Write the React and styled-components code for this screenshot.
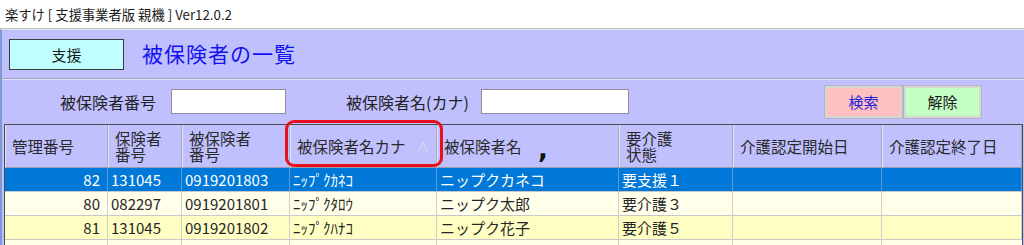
import React from "react";
import styled, { createGlobalStyle } from "styled-components";

const GlobalStyle = createGlobalStyle`
  html, body {
    margin: 0;
    padding: 0;
    background: #ffffff;
    overflow: hidden;
  }
  body {
    font-family: "Noto Sans CJK JP", "Noto Sans", sans-serif;
    color: #222;
  }
`;

const TitleBar = styled.div`
  height: 28px;
  padding-left: 5px;
  display: flex;
  align-items: center;
  font-size: 13.3px;
  color: #1a1a1a;
  background: #fff;
  border-bottom: 1px solid #c4c4c4;
`;

const Body = styled.div`
  background: #c0c0ff;
  border-left: 2px solid #7f9ad2;
  border-top: 1px solid #e4e4ec;
  height: 216px;
  overflow: hidden;
`;

const HeaderBand = styled.div`
  height: 48px;
  display: flex;
  align-items: center;
  gap: 18px;
  padding-left: 7px;
  border-bottom: 1px solid #a4a4c0;
  box-shadow: 0 1px 0 #e2e2f4;
`;

const ModeButton = styled.div`
  width: 113px;
  height: 29px;
  background: #c0ffff;
  border: 1px solid #3c3c3c;
  display: flex;
  align-items: center;
  justify-content: center;
  font-size: 15px;
  color: #1a1a1a;
`;

const PageTitle = styled.div`
  font-size: 21px;
  color: #1212f0;
  letter-spacing: 1px;
  margin-top: -2px;
`;

const SearchRow = styled.div`
  height: 45px;
  display: flex;
  align-items: center;
  padding-left: 58px;
  padding-right: 43px;
`;

const Label = styled.span`
  font-size: 16px;
  color: #222;
  margin-right: ${(p) => p.$gap}px;
`;

const Field = styled.div`
  width: ${(p) => p.$w}px;
  height: 23px;
  background: #fff;
  border: 1px solid #8c8c9c;
  margin-right: ${(p) => p.$after || 0}px;
`;

const ActionButton = styled.div`
  width: 73px;
  height: 28px;
  margin-left: ${(p) => (p.$first ? "auto" : "2px")};
  background: ${(p) => p.$bg};
  color: ${(p) => p.$fg};
  border: 2px solid #d6d6d6;
  outline: 1px solid #b4b4c4;
  display: flex;
  align-items: center;
  justify-content: center;
  font-size: 15px;
`;

const TableWrap = styled.div`
  position: relative;
  margin-left: 2px;
  margin-right: 1px;
  border-top: 1px solid #4c4c4c;
  border-left: 1px solid #4c4c4c;
  border-right: 1px solid #4c4c4c;
`;

const Grid = styled.div`
  display: grid;
  grid-template-columns: 103px 74px 108px 147px 182px 114px 149px 1fr;
`;

const HeadCell = styled.div`
  height: 43px;
  box-sizing: border-box;
  border-right: 1px solid #a8a8c0;
  border-left: 1px solid #e4e4f6;
  border-bottom: 1px solid #9c9cb0;
  padding-left: 6px;
  padding-right: 8px;
  display: flex;
  align-items: center;
  justify-content: space-between;
  font-size: 15.5px;
  line-height: 16px;
  color: #2a2a2a;
  white-space: pre-line;
  &:last-child {
    border-right: none;
  }
`;

const SortMark = styled.span`
  font-size: 10px;
  color: #f4f4ff;
  text-shadow: 0 0 1px #b8b8d0;
  margin-top: 2px;
`;

const Cell = styled.div`
  height: 24px;
  box-sizing: border-box;
  border-right: 1px solid ${(p) => (p.$sel ? "#5a9ad8" : "#cfcfcf")};
  border-bottom: 1px solid #c8c8c8;
  background: ${(p) => p.$bg};
  color: ${(p) => (p.$sel ? "#ffffff" : "#262626")};
  display: flex;
  align-items: center;
  justify-content: ${(p) => (p.$right ? "flex-end" : "flex-start")};
  padding: ${(p) => (p.$right ? "0 7px 0 0" : "0 0 0 3px")};
  font-size: 15px;
  white-space: nowrap;
  overflow: hidden;
  &:last-child {
    border-right: none;
  }
`;

const Highlight = styled.div`
  position: absolute;
  left: 280px;
  top: -5px;
  width: 152px;
  height: 41px;
  border: 3px solid #e8101c;
  border-radius: 9px;
  pointer-events: none;
`;

const Tick = styled.span`
  position: absolute;
  left: 533px;
  top: 9px;
  font-size: 26px;
  font-weight: bold;
  color: #111;
  font-family: "DejaVu Sans", sans-serif;
`;

const headers = [
  "管理番号",
  "保険者\n番号",
  "被保険者\n番号",
  "被保険者名カナ",
  "被保険者名",
  "要介護\n状態",
  "介護認定開始日",
  "介護認定終了日",
];

const rows = [
  { no: "82", ins: "131045", num: "0919201803", kana: "ﾆｯﾌﾟｸｶﾈｺ", name: "ニップクカネコ", care: "要支援１", bg: "#0078d7", sel: true },
  { no: "80", ins: "082297", num: "0919201801", kana: "ﾆｯﾌﾟｸﾀﾛｳ", name: "ニップク太郎", care: "要介護３", bg: "#ffffea" },
  { no: "81", ins: "131045", num: "0919201802", kana: "ﾆｯﾌﾟｸﾊﾅｺ", name: "ニップク花子", care: "要介護５", bg: "#ffffc4" },
  { no: "", ins: "", num: "", kana: "", name: "", care: "", bg: "#ffffe8" },
];

export default function App() {
  return (
    <>
      <GlobalStyle />
      <TitleBar>楽すけ [ 支援事業者版 親機 ] Ver12.0.2</TitleBar>
      <Body>
        <HeaderBand>
          <ModeButton>支援</ModeButton>
          <PageTitle>被保険者の一覧</PageTitle>
        </HeaderBand>
        <SearchRow>
          <Label $gap={15}>被保険者番号</Label>
          <Field $w={113} $after={60} />
          <Label $gap={12}>被保険者名(カナ)</Label>
          <Field $w={146} />
          <ActionButton $first $bg="#ffc0c0" $fg="#2222dd">検索</ActionButton>
          <ActionButton $bg="#c4ffc4" $fg="#1a1a1a">解除</ActionButton>
        </SearchRow>
        <TableWrap>
          <Grid>
            {headers.map((h, i) => (
              <HeadCell key={h}>
                <span>{h}</span>
                {i === 3 && <SortMark>△</SortMark>}
              </HeadCell>
            ))}
            {rows.map((r, i) => (
              <React.Fragment key={i}>
                <Cell $bg={r.bg} $sel={r.sel} $right>{r.no}</Cell>
                <Cell $bg={r.bg} $sel={r.sel}>{r.ins}</Cell>
                <Cell $bg={r.bg} $sel={r.sel}>{r.num}</Cell>
                <Cell $bg={r.bg} $sel={r.sel}>{r.kana}</Cell>
                <Cell $bg={r.bg} $sel={r.sel}>{r.name}</Cell>
                <Cell $bg={r.bg} $sel={r.sel}>{r.care}</Cell>
                <Cell $bg={r.bg} $sel={r.sel} />
                <Cell $bg={r.bg} $sel={r.sel} />
              </React.Fragment>
            ))}
          </Grid>
          <Highlight />
          <Tick>,</Tick>
        </TableWrap>
      </Body>
    </>
  );
}
